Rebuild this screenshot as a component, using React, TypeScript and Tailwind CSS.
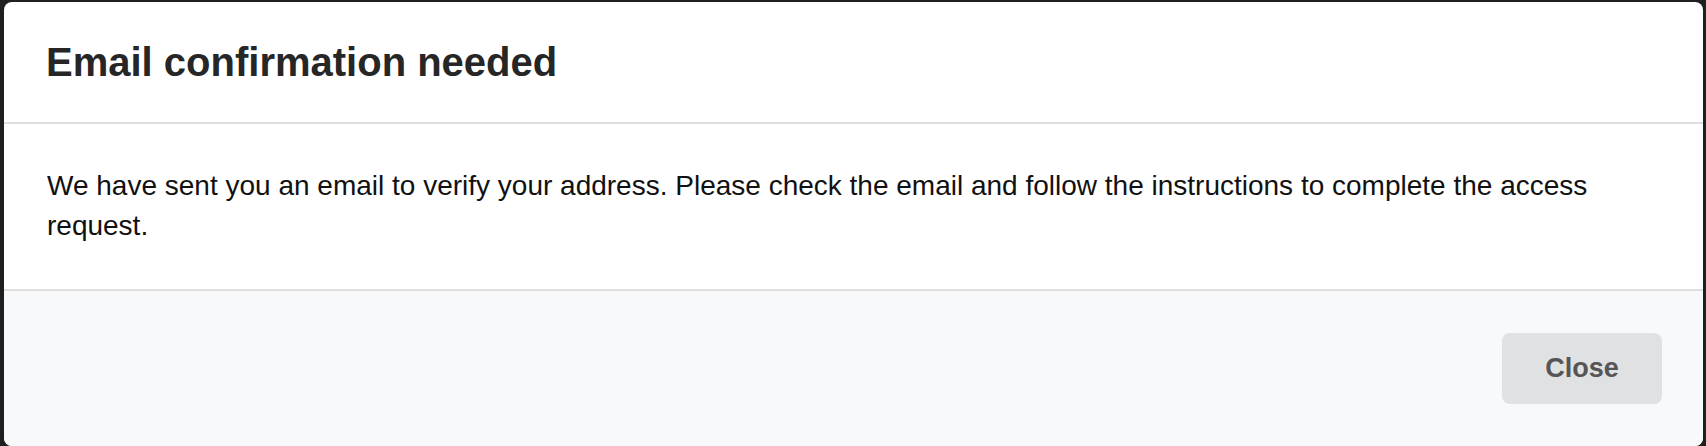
const App = () => {
  return (
    <div className="h-[446px] w-full bg-[#1f1f1f] pl-[4px] pr-[3px] pt-[2px] font-['Liberation_Sans',Arial,sans-serif]">
      <div className="h-full flex flex-col bg-white rounded-[8px] overflow-hidden">
        <div className="px-[42px] py-[36px] border-b-2 border-[#dfdfdf]">
          <h1 className="text-[40px] leading-[48px] font-bold text-[#262626]">
            Email confirmation needed
          </h1>
        </div>

        <div className="px-[43px] pt-[42px] pb-[43px] border-b-2 border-[#dfdfdf]">
          <p className="text-[28px] leading-[40px] text-[#111]">
            We have sent you an email to verify your address. Please check the
            email and follow the instructions to complete the access request.
          </p>
        </div>

        <div className="flex-1 flex justify-end items-start bg-[#f8f9fa] pt-[42px] pr-[41px]">
          <button className="w-[160px] h-[71px] rounded-[8px] bg-[#e0e1e3] text-[27px] font-bold text-[#555]">
            Close
          </button>
        </div>
      </div>
    </div>
  );
};

export default App;
